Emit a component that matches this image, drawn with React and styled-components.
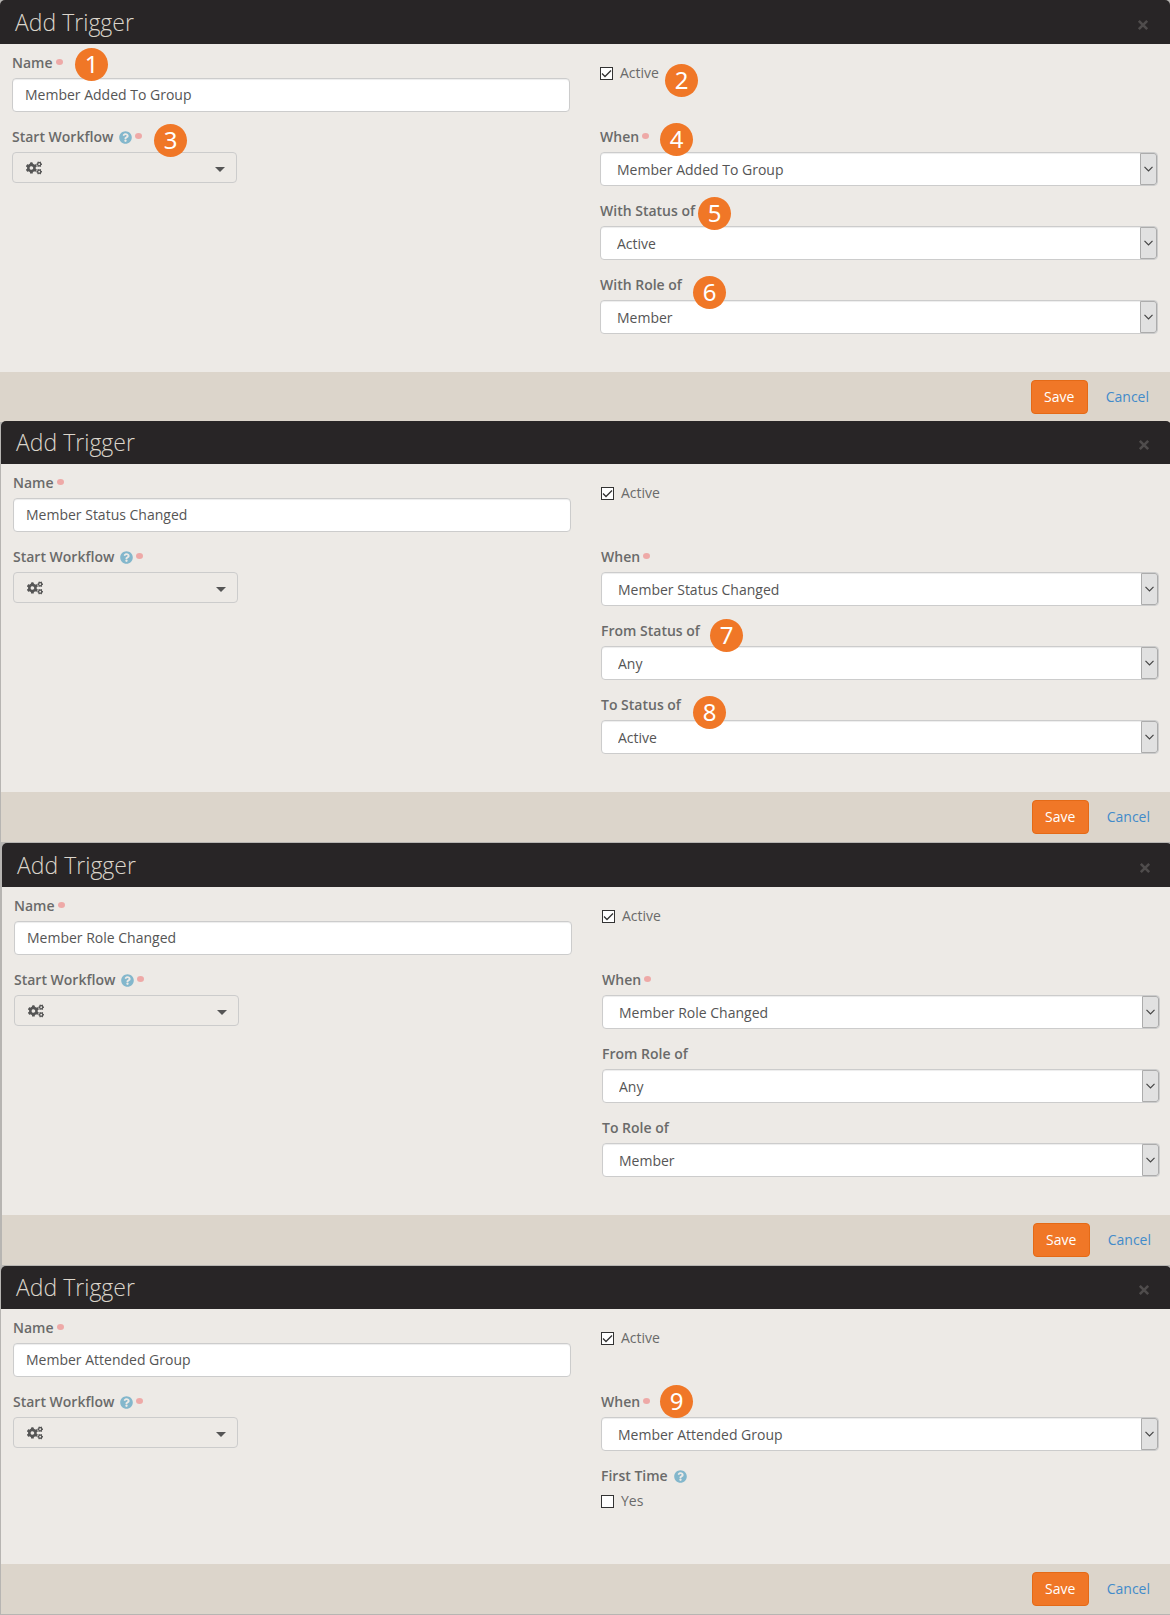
import React from "react";
import styled, { createGlobalStyle } from "styled-components";
import { FaCogs, FaQuestionCircle } from "react-icons/fa";

const GlobalStyle = createGlobalStyle`
  *, *::before, *::after { box-sizing: border-box; }
  body {
    margin: 0;
    overflow-x: hidden;
    background: #b7b5b2;
    color: #6a6a6a;
    font: 14px/20px "Open Sans", "Noto Sans", sans-serif;
  }
  button, input, select { font: inherit; }
`;

const Stack = styled.main`
  display: flex;
  flex-direction: column;
  overflow: hidden;
`;

const Panel = styled.form`
  margin: ${(p) => p.$gap}px -${(p) => p.$shift}px 0 ${(p) => p.$shift}px;
`;

const Header = styled.header`
  display: flex;
  align-items: flex-end;
  justify-content: space-between;
  height: ${(p) => (p.$short ? 43 : 44)}px;
  padding: 0 20px 4px 15px;
  border-radius: 5px 5px 0 0;
  background: #282526;
`;

const Title = styled.h2`
  margin: 0;
  color: #dbd5cb;
  font-size: 23px;
  font-weight: 300;
  line-height: 36px;
`;

const CloseButton = styled.button`
  display: flex;
  margin: 0 0 8px;
  padding: 1px;
  border: 0;
  background: none;
  color: #4f4c4c;
`;

const Body = styled.div`
  display: grid;
  grid-template-columns: 1fr 1fr;
  grid-template-rows: 74px auto;
  column-gap: 30px;
  padding: 9px 12px 23px;
  background: #edeae6;
`;

const Column = styled.div`
  display: flex;
  flex-direction: column;
  gap: 15px;
  min-width: 0;
`;

const Field = styled.div`
  position: relative;
  padding-top: ${(p) => p.$inset || 0}px;
  padding-bottom: ${(p) => p.$space || 0}px;
`;

const LabelRow = styled.div`
  display: flex;
  align-items: center;
  height: 20px;
  margin-bottom: 5px;
`;

const Label = styled.label`
  font-weight: 600;
`;

const HelpButton = styled.button`
  display: flex;
  margin-left: 6px;
  padding: 0;
  border: 0;
  background: none;
  color: #83b7cc;
  font-size: 13px;
`;

const RequiredDot = styled.span`
  width: 7px;
  height: 6px;
  margin: 0 0 2px 3px;
  border-radius: 50%;
  background: #eea9a7;
`;

const TextInput = styled.input`
  display: block;
  width: 100%;
  height: 34px;
  padding: 0 12px 2px;
  border: 1px solid #ccc;
  border-radius: 4px;
  background: #fff;
  box-shadow: inset 0 1px 1px rgba(0, 0, 0, 0.075);
  color: #555;
`;

const SelectWrap = styled.div`
  position: relative;
`;

const Select = styled.select`
  display: block;
  width: 100%;
  height: 34px;
  padding: 2px 32px 0 16px;
  appearance: none;
  border: 1px solid #ccc;
  border-radius: 4px;
  background: #fff;
  box-shadow: inset 0 1px 1px rgba(0, 0, 0, 0.075);
  color: #555;
`;

const SelectArrow = styled.span`
  position: absolute;
  top: 1px;
  right: 1px;
  bottom: 1px;
  display: flex;
  align-items: center;
  padding-left: 3px;
  width: 17px;
  border: 1px solid #acacac;
  border-radius: 0 3px 3px 0;
  background: #e1e1e1;
  pointer-events: none;
`;

const WorkflowButton = styled.button`
  display: flex;
  align-items: center;
  justify-content: space-between;
  width: 225px;
  height: 31px;
  padding: 0 11px 0 13px;
  border: 1px solid #ccc;
  border-radius: 4px;
  background: transparent;
  color: #555;
  font-size: 16px;
`;

const Caret = styled.span`
  margin-top: 3px;
  border: 5px solid transparent;
  border-top-color: #555;
  border-bottom: 0;
`;

const CheckLabel = styled.label`
  display: flex;
  align-items: center;
  gap: 7px;
  height: 20px;
`;

const CheckBoxWrap = styled.span`
  display: grid;
  width: 13px;
  height: 13px;

  > * {
    grid-area: 1 / 1;
  }
  svg {
    z-index: 1;
    visibility: hidden;
    pointer-events: none;
  }
  input:checked + svg {
    visibility: visible;
  }
`;

const CheckInput = styled.input`
  width: 13px;
  height: 13px;
  margin: 0;
  appearance: none;
  border: 1px solid #333;
  background: #fff;
`;

const Badge = styled.span`
  position: absolute;
  z-index: 2;
  top: ${(p) => p.$y}px;
  left: ${(p) => p.$x}px;
  width: 33px;
  height: 33px;
  border-radius: 50%;
  background: #f07727;
  color: #fff;
  font-family: "Noto Sans", "Open Sans", sans-serif;
  font-size: 24px;
  line-height: 32px;
  text-align: center;
`;

const Footer = styled.footer`
  display: flex;
  align-items: center;
  justify-content: flex-end;
  gap: 18px;
  padding: 8px 21px 8px 12px;
  background: #dcd5cb;
`;

const SaveButton = styled.button`
  width: 57px;
  height: 34px;
  padding: 0;
  border: 1px solid #e46a17;
  border-radius: 4px;
  background: #f07727;
  color: #fff;
`;

const CancelLink = styled.a`
  color: #428bca;
  text-decoration: none;
`;

const panels = [
  {
    id: "added",
    name: "Member Added To Group",
    gap: 0,
    shift: 0,
    badges: { name: [1, 63, -5], active: [2, 65, 11], workflow: [3, 142, -3], when: [4, 60, -4] },
    fields: [
      { label: "With Status of", value: "Active", badge: [5, 98, -4] },
      { label: "With Role of", value: "Member", badge: [6, 93, 1] },
    ],
  },
  {
    id: "status",
    name: "Member Status Changed",
    gap: -1,
    shift: 1,
    short: true,
    badges: {},
    fields: [
      { label: "From Status of", value: "Any", badge: [7, 109, -2] },
      { label: "To Status of", value: "Active", badge: [8, 92, 1] },
    ],
  },
  {
    id: "role",
    name: "Member Role Changed",
    gap: 1,
    shift: 2,
    badges: {},
    fields: [
      { label: "From Role of", value: "Any" },
      { label: "To Role of", value: "Member" },
    ],
  },
  {
    id: "attended",
    name: "Member Attended Group",
    gap: 1,
    shift: 1,
    short: true,
    badges: { when: [9, 59, -7] },
    fields: [],
    firstTime: true,
  },
];

function Marker({ data }) {
  if (!data) return null;
  const [number, x, y] = data;
  return <Badge $x={x} $y={y}>{number}</Badge>;
}

function Help() {
  return (
    <HelpButton type="button" aria-label="Help">
      <FaQuestionCircle />
    </HelpButton>
  );
}

function CheckBox({ id, checked, children }) {
  return (
    <CheckLabel htmlFor={id}>
      <CheckBoxWrap>
        <CheckInput id={id} type="checkbox" defaultChecked={checked} />
        <svg width="13" height="13" viewBox="0 0 13 13" aria-hidden="true">
          <path d="M2 6.5 5 9.5 11 3.5" fill="none" stroke="#333" strokeWidth="1.3" />
        </svg>
      </CheckBoxWrap>
      {children}
    </CheckLabel>
  );
}

function SelectField({ id, label, value, required, badge }) {
  return (
    <Field>
      <LabelRow>
        <Label htmlFor={id}>{label}</Label>
        {required && <RequiredDot />}
      </LabelRow>
      <SelectWrap>
        <Select id={id} defaultValue={value}>
          <option>{value}</option>
        </Select>
        <SelectArrow>
          <svg width="9" height="6" viewBox="0 0 9 6" aria-hidden="true">
            <path d="M.5 .8 4.5 4.8 8.5 .8" fill="none" stroke="#444" strokeWidth="1.2" />
          </svg>
        </SelectArrow>
      </SelectWrap>
      <Marker data={badge} />
    </Field>
  );
}

function TriggerPanel({ panel }) {
  const { id, name, badges } = panel;
  return (
    <Panel $gap={panel.gap} $shift={panel.shift} onSubmit={(e) => e.preventDefault()}>
      <Header $short={panel.short}>
        <Title>Add Trigger</Title>
        <CloseButton type="button" aria-label="Close">
          <svg width="12" height="12" viewBox="0 0 12 12" aria-hidden="true">
            <path d="M1.8 1.8 10.2 10.2M10.2 1.8 1.8 10.2" stroke="currentColor" strokeWidth="2.6" />
          </svg>
        </CloseButton>
      </Header>
      <Body>
        <Field>
          <LabelRow>
            <Label htmlFor={`${id}-name`}>Name</Label>
            <RequiredDot />
          </LabelRow>
          <TextInput id={`${id}-name`} type="text" defaultValue={name} />
          <Marker data={badges.name} />
        </Field>
        <Field $inset={10}>
          <CheckBox id={`${id}-active`} checked>Active</CheckBox>
          <Marker data={badges.active} />
        </Field>
        <Field>
          <LabelRow>
            <Label htmlFor={`${id}-workflow`}>Start Workflow</Label>
            <Help />
            <RequiredDot />
          </LabelRow>
          <WorkflowButton id={`${id}-workflow`} type="button">
            <FaCogs />
            <Caret />
          </WorkflowButton>
          <Marker data={badges.workflow} />
        </Field>
        <Column>
          <SelectField id={`${id}-when`} label="When" value={name} required badge={badges.when} />
          {panel.fields.map((field, i) => (
            <SelectField key={field.label} id={`${id}-field-${i}`} {...field} />
          ))}
          {panel.firstTime && (
            <Field $space={30}>
              <LabelRow>
                <Label htmlFor={`${id}-first`}>First Time</Label>
                <Help />
              </LabelRow>
              <CheckBox id={`${id}-first`}>Yes</CheckBox>
            </Field>
          )}
          {!panel.firstTime && <span />}
        </Column>
      </Body>
      <Footer>
        <SaveButton type="submit">Save</SaveButton>
        <CancelLink href="#cancel">Cancel</CancelLink>
      </Footer>
    </Panel>
  );
}

export default function App() {
  return (
    <>
      <GlobalStyle />
      <Stack>
        {panels.map((panel) => (
          <TriggerPanel key={panel.id} panel={panel} />
        ))}
      </Stack>
    </>
  );
}
